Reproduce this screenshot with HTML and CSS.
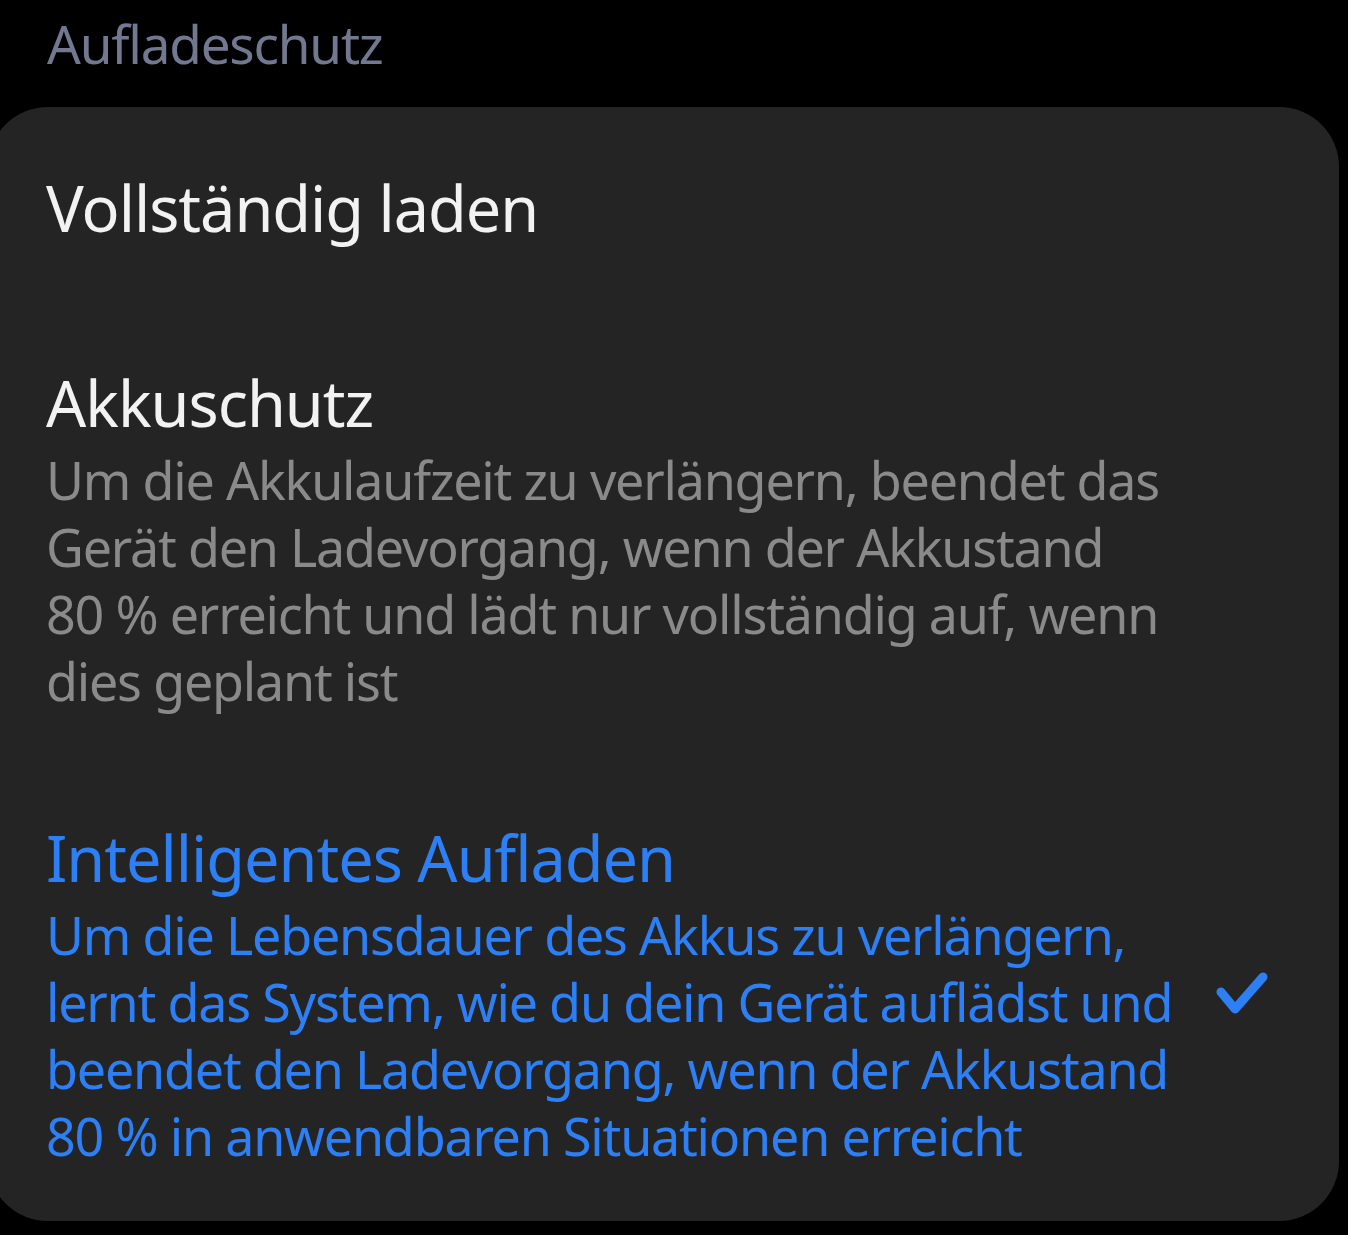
FILE: index.html
```html
<!DOCTYPE html>
<html lang="de">
<head>
<meta charset="utf-8">
<title>Aufladeschutz</title>
<link rel="stylesheet" href="styles.css">
</head>
<body>
<header class="section-title">Aufladeschutz</header>
<main class="card">
  <div class="option option-first">
    <div class="option-text">
      <div class="option-title">Vollständig laden</div>
    </div>
  </div>
  <div class="option option-second">
    <div class="option-text">
      <div class="option-title">Akkuschutz</div>
      <div class="option-desc">Um die Akkulaufzeit zu verlängern, beendet das<br>Gerät den Ladevorgang, wenn der Akkustand<br>80 % erreicht und lädt nur vollständig auf, wenn<br>dies geplant ist</div>
    </div>
  </div>
  <div class="option option-third selected">
    <div class="option-text">
      <div class="option-title">Intelligentes Aufladen</div>
      <div class="option-desc">Um die Lebensdauer des Akkus zu verlängern,<br>lernt das System, wie du dein Gerät auflädst und<br>beendet den Ladevorgang, wenn der Akkustand<br>80 % in anwendbaren Situationen erreicht</div>
    </div>
    <svg class="check" width="56" height="50" viewBox="0 0 56 50" aria-hidden="true">
      <polyline points="6,21 20,38 48,6" fill="none" stroke="#2d7ff5" stroke-width="9" stroke-linecap="round" stroke-linejoin="round"/>
    </svg>
  </div>
</main>
</body>
</html>
```

FILE: styles.css
```css
html, body {
  margin: 0;
  padding: 0;
  background: #000;
}
body {
  font-family: "Noto Sans", "Open Sans", sans-serif;
  width: 1348px;
  height: 1235px;
  overflow: hidden;
}
.section-title {
  color: #737891;
  font-size: 53px;
  line-height: 64px;
  letter-spacing: -1.2px;
  padding: 12px 0 0 47px;
  height: 107px;
  box-sizing: border-box;
  white-space: nowrap;
}
.card {
  background: #242424;
  margin-left: -12px;
  width: 1351px;
  height: 1114px;
  box-sizing: border-box;
  border-radius: 60px;
  padding: 65px 0 0 58px;
}
.option {
  display: flex;
  align-items: center;
  white-space: nowrap;
}
.option-text {
  flex: 1;
}
.option-title {
  color: #f2f2f2;
  font-size: 63px;
  line-height: 72px;
  letter-spacing: -1px;
}
.option-desc {
  color: #8a8a8a;
  font-size: 52px;
  line-height: 67px;
  letter-spacing: -1.2px;
  margin-top: 7px;
}
.option-second {
  margin-top: 123px;
}
.option-third {
  margin-top: 108px;
}
.selected .option-title,
.selected .option-desc {
  color: #2d7ff5;
}
.check {
  margin-right: 68px;
  flex: none;
}
```
